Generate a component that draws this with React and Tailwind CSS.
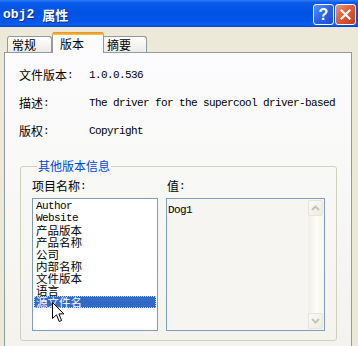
const LAT = "font-['Liberation_Mono',monospace] text-[11px] tracking-[-0.6px]";

function Chevron({ up }) {
  return (
    <svg width="9" height="6" viewBox="0 0 9 6">
      <polyline
        points={up ? "1,5 4.5,1.5 8,5" : "1,1 4.5,4.5 8,1"}
        fill="none"
        stroke="#C6C4B6"
        strokeWidth="2"
      />
    </svg>
  );
}

function ScrollBtn({ up }) {
  return (
    <div className="h-[16px] w-[15px] rounded-[2px] border border-[#E6E4DC] bg-[linear-gradient(135deg,#FBFAF7,#EDEBE3)] flex items-center justify-center">
      <Chevron up={up} />
    </div>
  );
}

export default function App() {
  const rows = [
    ["文件版本", "1.0.0.536"],
    ["描述", "The driver for the supercool driver-based"],
    ["版权", "Copyright"],
  ];
  const items = [
    { t: "Author", lat: true },
    { t: "Website", lat: true },
    { t: "产品版本" },
    { t: "产品名称" },
    { t: "公司" },
    { t: "内部名称" },
    { t: "文件版本" },
    { t: "语言" },
    { t: "源文件名", sel: true },
  ];
  return (
    <div className="relative w-[358px] h-[346px] overflow-hidden bg-[#ECE9D8] flex flex-col font-['Noto_Sans_CJK_SC',sans-serif] text-[12px] leading-[14px] text-black">
      {/* Title bar */}
      <div className="h-[27px] shrink-0 flex items-center justify-between pl-[3px] pr-[2px] bg-[linear-gradient(180deg,#2E7EF4_0%,#0A5BEB_10%,#0052E4_45%,#0056EA_80%,#0A60F0_92%,#0040D0_100%)]">
        <div className="flex items-center pt-[2px] text-white font-bold [text-shadow:1px_1px_0_#0A2A8A]">
          <span className="font-['Liberation_Mono',monospace] text-[13px]">obj2</span>
          <span className="ml-[8px] text-[13px]">属性</span>
        </div>
        <div className="flex items-center gap-[1px] mt-[2px]">
          <div className="w-[21px] h-[21px] rounded-[3px] border border-white bg-[linear-gradient(135deg,#5C95F8_0%,#2A62E2_50%,#1C4FD6_100%)] flex items-center justify-center text-white font-bold text-[16px] leading-none font-['Liberation_Sans',sans-serif]">
            ?
          </div>
          <div className="w-[21px] h-[21px] rounded-[3px] border border-white bg-[linear-gradient(135deg,#EE9474_0%,#DB5A34_50%,#C23E1C_100%)] flex items-center justify-center">
            <svg width="11" height="11" viewBox="0 0 11 11">
              <path d="M1.5 1.5 L9.5 9.5 M9.5 1.5 L1.5 9.5" stroke="white" strokeWidth="2.2" strokeLinecap="square" />
            </svg>
          </div>
        </div>
      </div>

      {/* Tabs */}
      <div className="h-[25px] shrink-0 flex items-end pl-[7px]">
        <div className="h-[16px] w-[45px] border border-b-0 border-[#919B9C] rounded-t-[3px] bg-[linear-gradient(180deg,#FFFFFF,#ECEBE6)] flex items-center pl-[4px]">
          常规
        </div>
        <div className="relative z-10 -mb-[1px] h-[21px] w-[52px] border border-t-0 border-b-0 border-[#919B9C] rounded-t-[3px] bg-[#FCFCFE] flex flex-col">
          <div className="h-[3px] -mx-[1px] rounded-t-[3px] bg-[linear-gradient(180deg,#E68B2C,#FFC73C)]" />
          <div className="flex-1 flex items-center pl-[7px]">版本</div>
        </div>
        <div className="h-[16px] w-[43px] border border-l-0 border-b-0 border-[#919B9C] rounded-tr-[3px] bg-[linear-gradient(180deg,#FFFFFF,#ECEBE6)] flex items-center pl-[3px]">
          摘要
        </div>
      </div>

      {/* Panel */}
      <div className="ml-[4px] w-[348px] h-[320px] shrink-0 border border-[#919B9C] bg-[linear-gradient(180deg,#FCFCFE_0%,#F8F8F6_40%,#F3F2EC_100%)]">
        <div className="flex flex-col pt-[8px] pl-[14px]">
          {rows.map(([k, v]) => (
            <div key={k} className="flex h-[28px] items-center whitespace-nowrap">
              <div className="w-[70px] flex items-center">
                <span>{k}</span>
                <span className={LAT}>:</span>
              </div>
              <span className={LAT}>{v}</span>
            </div>
          ))}
        </div>

        <fieldset className="mt-[14px] ml-[15px] w-[317px] h-[182px] border border-[#D0D0BF] rounded-[3px] pl-[11px] pr-[10px]">
          <legend className="ml-[5px] px-[1px] text-[#0046D5] leading-[14px]">其他版本信息</legend>
          <div className="flex gap-[8px] mt-[6px]">
            <div className="w-[126px] flex flex-col">
              <div className="flex items-center h-[14px]">
                <span>项目名称</span>
                <span className={LAT}>:</span>
              </div>
              <div className="relative mt-[5px] h-[133px] border border-[#7F9DB9] bg-white pt-[1px] pl-[1px] pr-[1px]">
                {items.map((it) => (
                  <div
                    key={it.t}
                    className={
                      it.sel
                        ? "h-[12px] leading-[12px] pl-[1px] bg-[#316AC5] text-white border border-dotted border-[#C8D6F0] flex items-center whitespace-nowrap"
                        : "h-[12px] leading-[12px] pl-[2px] flex items-center whitespace-nowrap"
                    }
                  >
                    <span className={it.lat ? LAT + " leading-[12px]" : "text-[11.5px] leading-[12px]"}>{it.t}</span>
                  </div>
                ))}
              </div>
            </div>
            <div className="w-[159px] flex flex-col">
              <div className="flex items-center h-[14px] pl-[1px]">
                <span>值</span>
                <span className={LAT}>:</span>
              </div>
              <div className="mt-[5px] h-[133px] border border-[#7F9DB9] bg-[#F6F5F1] flex">
                <div className="flex-1 pl-[1px] pt-[2px]">
                  <span className={LAT + " leading-[12px]"}>Dog1</span>
                </div>
                <div className="w-[15px] my-[1px] mr-[1px] flex flex-col bg-[linear-gradient(90deg,#F1EFE8,#FEFEFB_60%,#F6F5F0)]">
                  <ScrollBtn up />
                  <div className="flex-1" />
                  <ScrollBtn />
                </div>
              </div>
            </div>
          </div>
        </fieldset>
      </div>

      {/* Mouse cursor */}
      <svg className="absolute left-[52px] top-[302px]" width="13" height="21" viewBox="0 0 13 21">
        <path
          d="M0.5 0.5 L0.5 16.5 L4.5 12.8 L7.2 19.5 L9.6 18.5 L6.9 11.9 L11.8 11.9 Z"
          fill="white"
          stroke="black"
          strokeWidth="1"
          strokeLinejoin="miter"
        />
      </svg>
    </div>
  );
}
